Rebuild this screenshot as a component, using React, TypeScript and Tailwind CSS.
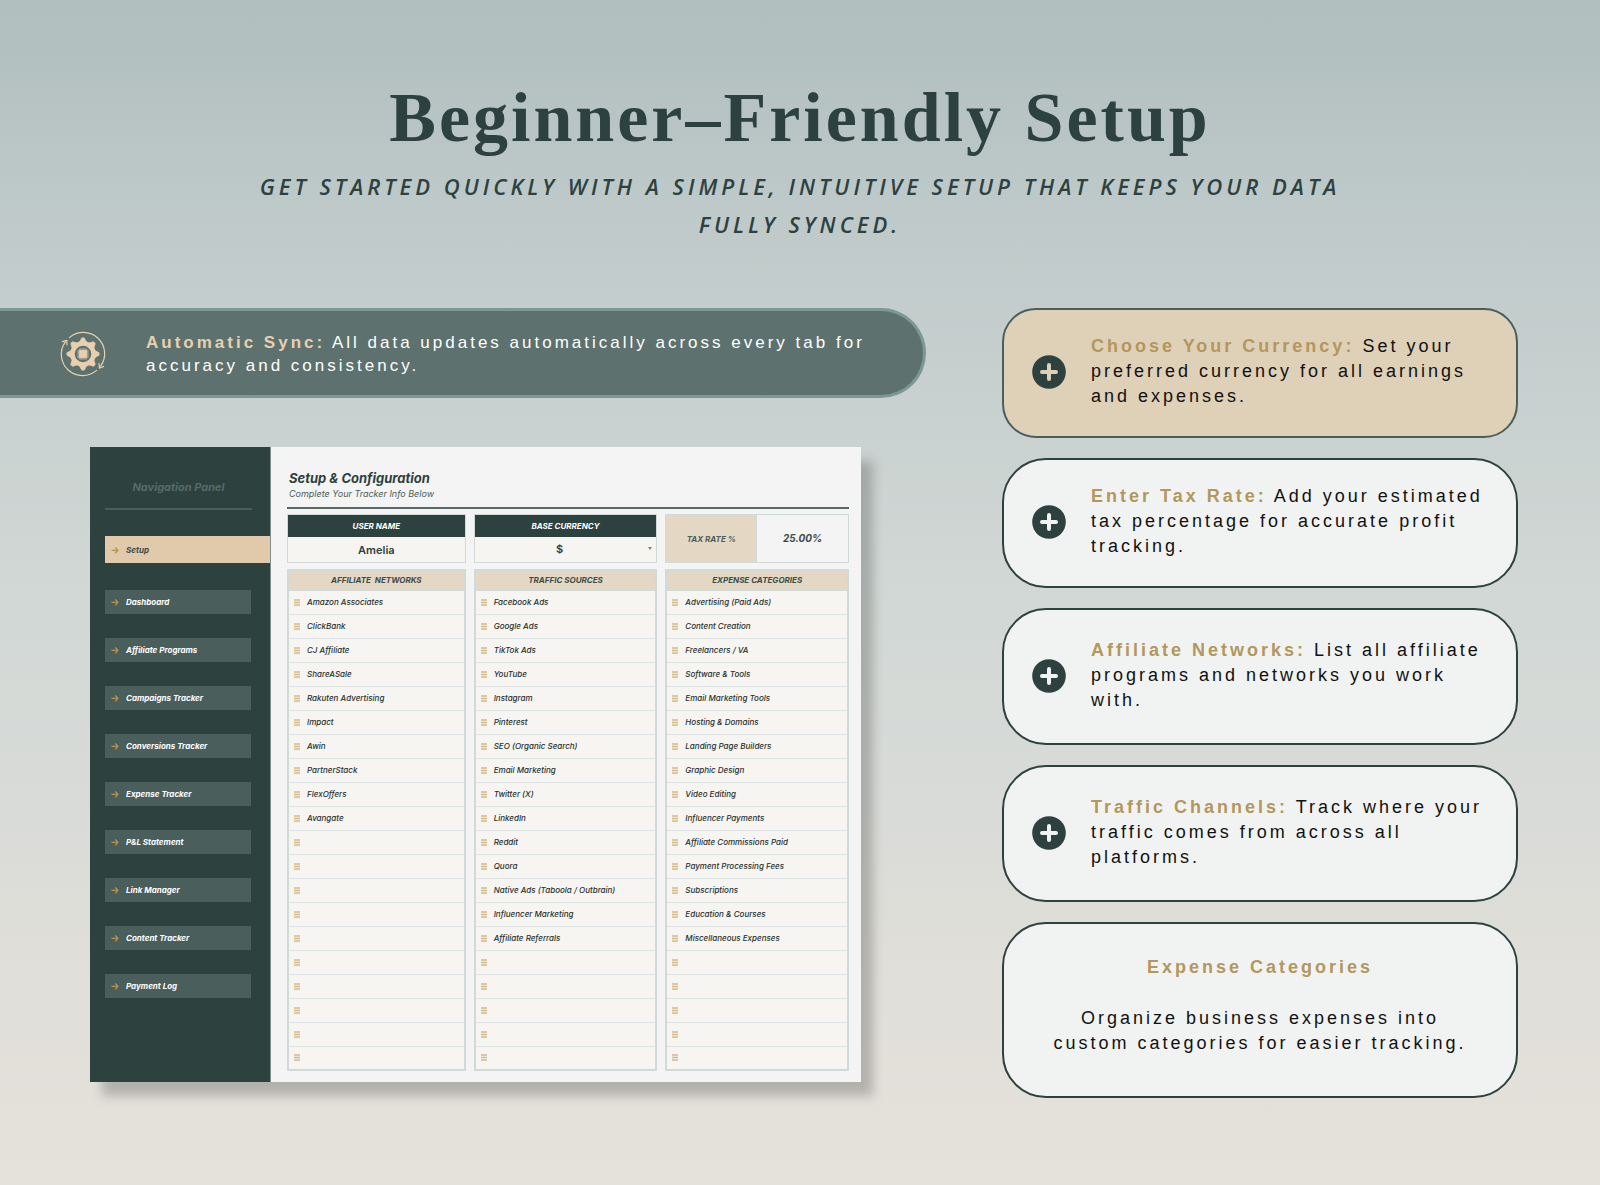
import { clsx } from "clsx";

const navItems = [
  "Dashboard",
  "Affiliate Programs",
  "Campaigns Tracker",
  "Conversions Tracker",
  "Expense Tracker",
  "P&L Statement",
  "Link Manager",
  "Content Tracker",
  "Payment Log",
];

const networks = [
  "Amazon Associates",
  "ClickBank",
  "CJ Affiliate",
  "ShareASale",
  "Rakuten Advertising",
  "Impact",
  "Awin",
  "PartnerStack",
  "FlexOffers",
  "Avangate",
];

const sources = [
  "Facebook Ads",
  "Google Ads",
  "TikTok Ads",
  "YouTube",
  "Instagram",
  "Pinterest",
  "SEO (Organic Search)",
  "Email Marketing",
  "Twitter (X)",
  "LinkedIn",
  "Reddit",
  "Quora",
  "Native Ads (Taboola / Outbrain)",
  "Influencer Marketing",
  "Affiliate Referrals",
];

const expenses = [
  "Advertising (Paid Ads)",
  "Content Creation",
  "Freelancers / VA",
  "Software & Tools",
  "Email Marketing Tools",
  "Hosting & Domains",
  "Landing Page Builders",
  "Graphic Design",
  "Video Editing",
  "Influencer Payments",
  "Affiliate Commissions Paid",
  "Payment Processing Fees",
  "Subscriptions",
  "Education & Courses",
  "Miscellaneous Expenses",
];

const ROW_COUNT = 20;

const features = [
  {
    title: "Choose Your Currency:",
    text: "Set your preferred currency for all earnings and expenses.",
    box: "rounded-[34px] border-[#4a5f5c] bg-[#dfd0b8] pt-6 pb-[27px]",
    plus: "#dfd0b8",
  },
  {
    title: "Enter Tax Rate:",
    text: "Add your estimated tax percentage for accurate profit tracking.",
    box: "rounded-[44px] border-[#2d413f] bg-[#f1f3f2] pt-6 pb-[27px]",
    plus: "#f1f3f2",
  },
  {
    title: "Affiliate Networks:",
    text: "List all affiliate programs and networks you work with.",
    box: "rounded-[44px] border-[#2d413f] bg-[#f1f3f2] pt-7 pb-[30px]",
    plus: "#f1f3f2",
  },
  {
    title: "Traffic Channels:",
    text: "Track where your traffic comes from across all platforms.",
    box: "rounded-[44px] border-[#2d413f] bg-[#f1f3f2] pt-7 pb-[30px]",
    plus: "#f1f3f2",
  },
];

function SyncIcon() {
  const teeth = [0, 45, 90, 135, 180, 225, 270, 315];
  const pins = [-3, -1, 1, 3];
  return (
    <svg className="h-[46px] w-[46px] shrink-0" viewBox="-23 -23 46 46" fill="none" stroke="#e8d0af" aria-hidden="true">
      <g strokeWidth="1.2" strokeLinecap="round" strokeLinejoin="round">
        <path d="M-13.6 -16.4A21.3 21.3 0 0 1 17.6 12.2" />
        <path d="M20.6 12.4L16.4 14.2L16 9.6" />
        <path d="M13.6 16.4A21.3 21.3 0 0 1 -17.6 -12.2" />
        <path d="M-20.6 -12.4L-16.2 -13.6L-16 -9.2" />
      </g>
      <circle r="10.6" strokeWidth="4.6" />
      {teeth.map((angle) => (
        <path
          key={angle}
          d="M-3.4 -12L-2 -14.6A2 1.6 0 0 1 2 -14.6L3.4 -12Z"
          fill="#e8d0af"
          strokeWidth="0.8"
          strokeLinejoin="round"
          transform={`rotate(${angle})`}
        />
      ))}
      <rect x="-3.8" y="-3.8" width="7.6" height="7.6" rx="1" fill="#e8d0af" stroke="none" />
      <g strokeWidth="1" strokeLinecap="round">
        {pins.map((p) => (
          <path key={p} d={`M${p} -5.2V5.2M-5.2 ${p}H5.2`} />
        ))}
      </g>
    </svg>
  );
}

function PlusIcon({ color }: { color: string }) {
  return (
    <svg className="h-[34px] w-[34px] shrink-0" viewBox="0 0 34 34" aria-hidden="true">
      <circle cx="17" cy="17" r="16.8" fill="#2d413f" />
      <path d="M17 10V24M10 17H24" stroke={color} strokeWidth="4" strokeLinecap="round" />
    </svg>
  );
}

function ArrowIcon() {
  return (
    <svg className="h-2 w-2 shrink-0" viewBox="0 0 8 8" fill="none" stroke="#b8924f" strokeWidth="1.3" aria-hidden="true">
      <path d="M0.5 4.3H7M4.2 1.4L7 4.3L4.2 7.2" />
    </svg>
  );
}

function RowsIcon() {
  return (
    <svg className="h-[7px] w-[6px]" viewBox="0 0 6 7" fill="none" stroke="#d3b987" strokeWidth="1.6" aria-hidden="true">
      <path d="M0 1H6M0 3.5H6M0 6H6" />
    </svg>
  );
}

function Sidebar() {
  return (
    <nav className="w-[181px] shrink-0 border-r border-[#7f918e] bg-[#2d413f] pl-[15px] text-[8px] leading-3 font-bold italic">
      <p className="mr-[18px] border-b-2 border-[#4a5f5c] pt-8 pb-[13px] text-center text-[11px] leading-4 text-[#566b68]">
        Navigation Panel
      </p>
      <a href="#setup" className="mt-[26px] flex h-[27px] items-center gap-[7px] bg-[#e1caab] pl-1.5 text-[#3c4c48]">
        <ArrowIcon />
        Setup
      </a>
      <ul className="mt-[27px] mr-[19px] flex flex-col gap-6">
        {navItems.map((item) => (
          <li key={item}>
            <a href="#" className="flex h-6 items-center gap-[7px] bg-[#4a5e5b] pl-1.5 text-white">
              <ArrowIcon />
              {item}
            </a>
          </li>
        ))}
      </ul>
    </nav>
  );
}

function ListTable({ title, rows }: { title: string; rows: string[] }) {
  return (
    <table className="w-full border-collapse border-2 border-[#d0dad9] bg-[#f6f5f2]">
      <thead>
        <tr>
          <th
            colSpan={2}
            className="h-5 border border-[#d0dad9] bg-[#e4d8c5] text-center text-[8px] leading-3 font-bold whitespace-pre text-[#3c4c48] italic"
          >
            {title}
          </th>
        </tr>
      </thead>
      <tbody>
        {Array.from({ length: ROW_COUNT }, (_, i) => (
          <tr key={i} className="h-6 border-b border-[#dce3e2]">
            <td className="w-[19px] pl-[5px]">
              <RowsIcon />
            </td>
            <td className="text-[8px] leading-3 font-medium text-[#26302e] italic">{rows[i]}</td>
          </tr>
        ))}
      </tbody>
    </table>
  );
}

function TrackerCard() {
  const fieldHead = "flex h-[22px] items-center justify-center bg-[#2d413f] text-[8px] font-bold text-white italic";
  const fieldValue = "block h-[25px] w-full bg-[#f6f5f2] text-center text-[11px] font-semibold text-[#2d413f]";

  return (
    <div className="flex bg-[#f4f4f4] font-['Inter',sans-serif] shadow-[12px_14px_10px_rgba(70,70,65,0.3)] [font-feature-settings:'cv11']">
      <Sidebar />
      <section className="min-w-0 flex-1 pt-[22px] pr-3 pb-[11px] pl-4">
        <header className="border-b-2 border-[#566b68] pb-[6px] pl-0.5 italic">
          <h2 className="text-[13px] leading-[18px] font-bold text-[#2d413f]">Setup &amp; Configuration</h2>
          <p className="text-[9px] leading-[14px] text-[#4a5e5b]">Complete Your Tracker Info Below</p>
        </header>

        <div className="mt-[5px] grid grid-cols-[36fr_37fr_37fr] gap-x-2 gap-y-[6px]">
          <div className="border border-[#d0dad9]">
            <label htmlFor="user-name" className={fieldHead}>
              USER NAME
            </label>
            <input id="user-name" className={clsx(fieldValue, "[font-feature-settings:normal]")} defaultValue="Amelia" />
          </div>

          <div className="relative border border-[#d0dad9]">
            <label htmlFor="currency" className={fieldHead}>
              BASE CURRENCY
            </label>
            <select
              id="currency"
              className={clsx(fieldValue, "appearance-none pr-5 pl-2 [text-align-last:center]")}
              defaultValue="$"
            >
              <option>$</option>
            </select>
            <svg className="pointer-events-none absolute right-1 bottom-3 h-[3px] w-1" viewBox="0 0 4 3" aria-hidden="true">
              <path d="M0 0H4L2 3Z" fill="#8a8468" />
            </svg>
          </div>

          <div className="flex border border-[#d0dad9] italic">
            <label
              htmlFor="tax-rate"
              className="flex w-1/2 items-center justify-center border-r border-[#d0dad9] bg-[#e4d8c5] text-[8px] font-bold text-[#4a5e5b]"
            >
              TAX RATE %
            </label>
            <input
              id="tax-rate"
              className="w-1/2 text-center text-[10px] font-bold text-[#3c4c48] italic"
              defaultValue="25.00%"
            />
          </div>

          <ListTable title="AFFILIATE  NETWORKS" rows={networks} />
          <ListTable title="TRAFFIC SOURCES" rows={sources} />
          <ListTable title="EXPENSE CATEGORIES" rows={expenses} />
        </div>
      </section>
    </div>
  );
}

export default function App() {
  return (
    <div className="min-h-screen bg-[linear-gradient(180deg,#b0bebe_0%,#bdc8c8_16%,#c6cfce_30%,#d0d7d5_48%,#d9dbd8_68%,#e1dfd9_85%,#e5e2db_100%)] pb-[87px] font-['Liberation_Sans',Arial,sans-serif]">
      <header className="mx-auto max-w-[1140px] pt-[78px] text-center text-[#2d4240]">
        <h1 className="font-['Liberation_Serif',serif] text-[70px] leading-[80px] font-bold tracking-[3px]">
          Beginner–Friendly Setup
        </h1>
        <p className="mt-[9px] font-['Open_Sans',sans-serif] text-[22px] leading-[38px] font-semibold tracking-[4px] uppercase italic">
          Get started quickly with a simple, intuitive setup that keeps your data fully synced.
        </p>
      </header>

      <main className="mt-[65px] flex items-start gap-[76px] pr-[82px]">
        <div className="min-w-0 flex-[926]">
          <div className="flex items-center gap-10 rounded-r-full border-3 border-l-0 border-[#7b9993] bg-[#5d716e] pt-5 pr-14 pb-[18px] pl-[60px]">
            <SyncIcon />
            <p className="text-[17px] leading-[23px] tracking-[3px] text-white">
              <b className="text-[#e8d0af]">Automatic Sync:</b> All data updates automatically across every tab for accuracy
              and consistency.
            </p>
          </div>
          <div className="mt-[49px] mr-[65px] ml-[90px]">
            <TrackerCard />
          </div>
        </div>

        <div className="flex min-w-0 flex-[516] flex-col gap-5 text-lg leading-[25px] tracking-[3px] text-[#111]">
          {features.map((feature) => (
            <article key={feature.title} className={clsx("flex items-center gap-[25px] border-2 pr-5 pl-7", feature.box)}>
              <PlusIcon color={feature.plus} />
              <p>
                <b className="text-[#b3975c]">{feature.title}</b> {feature.text}
              </p>
            </article>
          ))}
          <article className="rounded-[44px] border-2 border-[#2d413f] bg-[#f1f3f2] px-11 pt-[31px] pb-10 text-center">
            <h3 className="font-bold text-[#b3975c]">Expense Categories</h3>
            <p className="mt-[26px]">Organize business expenses into custom categories for easier tracking.</p>
          </article>
        </div>
      </main>
    </div>
  );
}
